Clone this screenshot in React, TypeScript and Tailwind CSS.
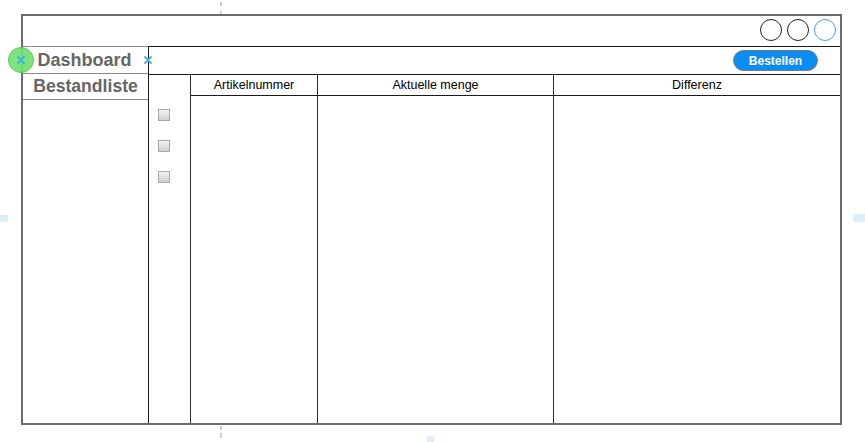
import React from "react";

const Cross = () => (
  <svg width="10" height="10" viewBox="0 0 10 10">
    <path d="M2 2 L8 8 M8 2 L2 8" stroke="#3ab0ee" strokeWidth="1.8" strokeLinecap="round" />
  </svg>
);

const Checkbox = () => (
  <div className="w-[12px] h-[12px] border border-[#a8a8a8] bg-gradient-to-b from-[#f2f2f2] to-[#d0d0d0]" />
);

export default function App() {
  return (
    <div
      className="relative w-[865px] h-[442px] bg-white overflow-hidden"
      style={{ fontFamily: '"Liberation Sans", Arial, sans-serif' }}
    >
      {/* canvas guide marks */}
      <div className="absolute left-[220px] top-[2px] w-[2px] h-[4px] bg-[#cfcfcf]" />
      <div className="absolute left-[220px] top-[11px] w-[2px] h-[5px] bg-[#cfcfcf]" />
      <div className="absolute left-[220px] top-[426px] w-[2px] h-[4px] bg-[#cfcfcf]" />
      <div className="absolute left-[220px] top-[433px] w-[2px] h-[5px] bg-[#cfcfcf]" />
      <div className="absolute left-0 top-[215px] w-[8px] h-[7px] bg-[#dbeefc]" />
      <div className="absolute left-[853px] top-[214px] w-[12px] h-[8px] bg-[#dbeefc]" />
      <div className="absolute left-[427px] top-[436px] w-[7px] h-[6px] bg-[#dbeefc]" />

      {/* window frame */}
      <div className="absolute left-[21px] top-[14px] w-[821px] h-[411px] border-2 border-[#6b6b6b] flex flex-col">
        {/* title bar */}
        <div className="h-[30px] flex justify-end items-start pt-[3px] pr-[4px] gap-[5px]">
          <div className="w-[22px] h-[22px] rounded-full border-[1.5px] border-[#222]" />
          <div className="w-[22px] h-[22px] rounded-full border-[1.5px] border-[#222]" />
          <div className="w-[22px] h-[22px] rounded-full border-[1.5px] border-[#3ea2f7]" />
        </div>
        {/* body */}
        <div className="flex-1 flex min-h-0">
          {/* sidebar */}
          <div className="w-[125px] flex flex-col border-t border-[#8a8a8a]">
            <div className="h-[27px] flex items-center justify-center border-b border-[#8a8a8a] text-[18px] font-bold text-[#666] leading-none pr-[2px]">
              Dashboard
            </div>
            <div className="h-[26px] flex items-center justify-center border-b border-[#8a8a8a] text-[17.6px] font-bold text-[#666] leading-none">
              Bestandliste
            </div>
          </div>
          {/* main panel */}
          <div className="flex-1 flex flex-col border-l border-t border-[#1a1a1a]">
            <div className="h-[27px] flex justify-end items-start pt-[3px] pr-[22px]">
              <div className="w-[85px] h-[21px] rounded-full bg-[#0a8cf5] border border-[#7a7a7a] flex items-center justify-center text-white font-bold text-[12px] leading-none">
                Bestellen
              </div>
            </div>
            <div className="flex-1 flex border-t border-[#1a1a1a]">
              <div className="w-[42px] border-r border-[#2a2a2a] flex flex-col pl-[9px] pt-[34px] gap-[19px]">
                <Checkbox />
                <Checkbox />
                <Checkbox />
              </div>
              <div className="w-[127px] border-r border-[#2a2a2a] flex flex-col">
                <div className="h-[21px] border-b border-[#1a1a1a] flex items-center justify-center text-[12.5px] text-black leading-none">
                  Artikelnummer
                </div>
              </div>
              <div className="w-[236px] border-r border-[#2a2a2a] flex flex-col">
                <div className="h-[21px] border-b border-[#1a1a1a] flex items-center justify-center text-[12.5px] text-black leading-none">
                  Aktuelle menge
                </div>
              </div>
              <div className="flex-1 flex flex-col">
                <div className="h-[21px] border-b border-[#1a1a1a] flex items-center justify-center text-[12.5px] text-black leading-none">
                  Differenz
                </div>
              </div>
            </div>
          </div>
        </div>
      </div>

      {/* selection handles */}
      <div className="absolute left-[8px] top-[47px] w-[26px] h-[26px] rounded-full bg-[#6fe06f]/90 border border-[#5ccc5c] flex items-center justify-center">
        <Cross />
      </div>
      <div className="absolute left-[143px] top-[55px]">
        <Cross />
      </div>
    </div>
  );
}
